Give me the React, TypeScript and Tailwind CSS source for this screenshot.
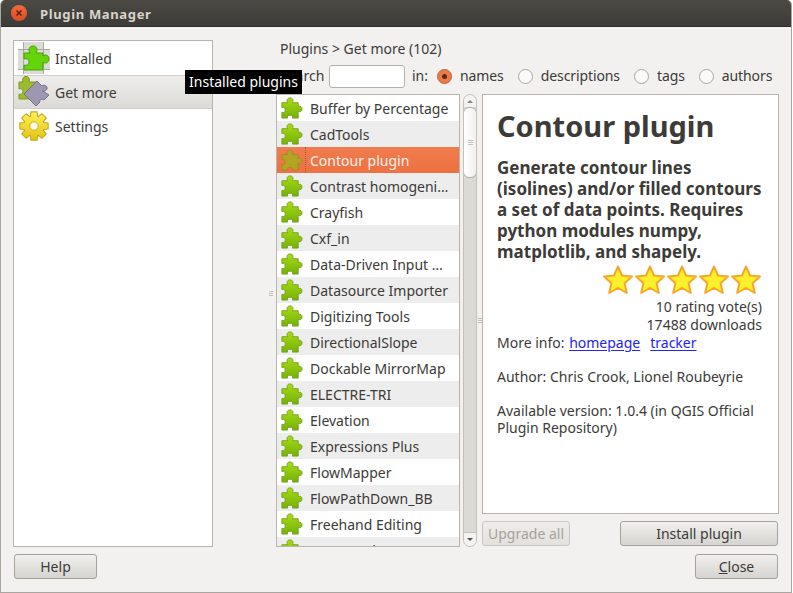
const plugins = [
  "Buffer by Percentage",
  "CadTools",
  "Contour plugin",
  "Contrast homogeni…",
  "Crayfish",
  "Cxf_in",
  "Data-Driven Input …",
  "Datasource Importer",
  "Digitizing Tools",
  "DirectionalSlope",
  "Dockable MirrorMap",
  "ELECTRE-TRI",
  "Elevation",
  "Expressions Plus",
  "FlowMapper",
  "FlowPathDown_BB",
  "Freehand Editing",
  "GeoSearch",
];

const puzzle =
  "M3 6H9C8 4 8 1 11.5 1C15 1 15 4 14 6H20V10C22 9 24 10 24 12.5C24 15 22 16 20 15V22H14C15 20 13.5 19 11.5 19C9.5 19 8 20 9 22H3V16C5 17 6.5 15.5 6.5 13.5C6.5 11.5 5 10 3 11Z";

function gearPath() {
  let d = "";
  const teeth = 8;
  for (let i = 0; i < teeth; i++) {
    const a = (i / teeth) * Math.PI * 2;
    const step = Math.PI / teeth;
    const pts = [
      [a - step * 0.9, 11],
      [a - step * 0.55, 15.5],
      [a + step * 0.55, 15.5],
      [a + step * 0.9, 11],
    ];
    for (const [t, r] of pts) {
      const x = 16 + r * Math.cos(t);
      const y = 16 + r * Math.sin(t);
      d += (d ? "L" : "M") + x.toFixed(1) + " " + y.toFixed(1);
    }
  }
  return d + "Z";
}

function Defs() {
  return (
    <svg className="absolute w-0 h-0">
      <defs>
        <linearGradient id="greenFill" x1="0" y1="0" x2="0" y2="1">
          <stop offset="0" stopColor="#a8dc10" />
          <stop offset="1" stopColor="#74b00c" />
        </linearGradient>
        <linearGradient id="gearFill" x1="0" y1="0" x2="0" y2="1">
          <stop offset="0" stopColor="#fff25a" />
          <stop offset="1" stopColor="#e2c214" />
        </linearGradient>
      </defs>
    </svg>
  );
}

function PuzzleIcon({ selected }: { selected?: boolean }) {
  return (
    <svg width="24" height="24" viewBox="0 0 25 23">
      <path
        d={puzzle}
        fill={selected ? "#b5a322" : "url(#greenFill)"}
        stroke={selected ? "#a08a2c" : "#76a31f"}
        strokeWidth="1"
      />
    </svg>
  );
}

function InstalledIcon() {
  return (
    <svg width="34" height="34" viewBox="0 0 34 34">
      <rect x="1" y="8" width="32" height="21" fill="#dcdcd6" />
      <rect x="6" y="1" width="20" height="32" fill="#dcdcd6" />
      <path d="M1 8.5H33M1 28.5H33M6.5 1V33M26.5 1V33" stroke="#a9a9a2" strokeWidth="1" fill="none" />
      <path
        d="M7 12H13C11 9 12 5 16 5C20 5 21 9 19 12H26V15C28 13 32 14 32 18C32 22 28 23 26 21V29H7V24C10 25 12 23.5 12 21C12 18.5 10 17 7 18Z"
        fill="#66d40a"
        stroke="#4c9e0c"
        strokeWidth="1"
      />
    </svg>
  );
}

function GetMoreIcon() {
  return (
    <svg width="34" height="34" viewBox="0 0 34 34">
      <path
        d="M2 7H6C5 4 6 1.5 9 1.5C12 1.5 13 4 12 7H20V24H2V19C4 20 6 19 6 16.5C6 14 4 13 2 14Z"
        fill="#9dbb2c"
        stroke="#7d9a22"
        strokeWidth="1"
      />
      <path
        d="M20 6L25 11C27 9 31 11 30 14C29 16 27 17 25.5 16L32 20L27 25C25 23 22 25 23 27L19 31L7 19Z"
        fill="#9d97b2"
        stroke="#77728c"
        strokeWidth="1"
      />
    </svg>
  );
}

function GearIcon() {
  return (
    <svg width="30" height="30" viewBox="0 0 32 32">
      <path d={gearPath()} fill="url(#gearFill)" stroke="#c9a91a" strokeWidth="1.2" />
      <circle cx="16" cy="16" r="4.5" fill="#fffde8" stroke="#c9a91a" strokeWidth="1" />
    </svg>
  );
}

function Star() {
  return (
    <svg width="32" height="32" viewBox="0 0 32 32" className="shrink-0">
      <path
        d="M16 2.5L20 11.5L30 12.5L22.6 19.2L24.8 29L16 24L7.2 29L9.4 19.2L2 12.5L12 11.5Z"
        fill="#fff02a"
        stroke="#f5a72c"
        strokeWidth="2"
        strokeLinejoin="round"
      />
    </svg>
  );
}

function Radio({ label, checked }: { label: string; checked?: boolean }) {
  return (
    <div className="flex items-center gap-[8px]">
      {checked ? (
        <span className="w-[15px] h-[15px] rounded-full bg-[#ee7a4a] border border-[#b5643f] flex items-center justify-center">
          <span className="w-[5px] h-[5px] rounded-full bg-[#5a2c1c]" />
        </span>
      ) : (
        <span className="w-[15px] h-[15px] rounded-full bg-[#fbfafa] border border-[#a9a59f]" />
      )}
      <span className="tracking-[-0.1px] -mt-px">{label}</span>
    </div>
  );
}

function Button({ children, className }: { children: React.ReactNode; className: string }) {
  return (
    <div
      className={
        "h-[25px] rounded-[3px] border border-[#a5a19b] bg-gradient-to-b from-[#f1f0ee] to-[#d6d4d0] flex items-center justify-center " +
        className
      }
    >
      {children}
    </div>
  );
}

function SideRow({ icon, label, active }: { icon: React.ReactNode; label: string; active?: boolean }) {
  return (
    <div
      className={
        "h-[34px] flex items-center " +
        (active ? "bg-gradient-to-b from-[#efeeec] to-[#dcdad6] border-y border-[#d2d0cc]" : "")
      }
    >
      <div className="w-[41px] flex justify-center pr-px">{icon}</div>
      <span className="pt-[2px]">{label}</span>
    </div>
  );
}

function Grip({ vertical }: { vertical?: boolean }) {
  return (
    <div className="flex flex-col gap-[1px]">
      {[0, 1, 2].map((i) => (
        <div key={i} className={vertical ? "w-[5px] h-[1px] bg-[#c4c1bb]" : "w-[4px] h-[1px] bg-[#c4c1bb]"} />
      ))}
    </div>
  );
}

export default function App() {
  return (
    <div className="relative w-[792px] h-[593px] flex flex-col bg-[#f2f1ef] border-x border-b border-[#a9a59f] rounded-t-[5px] overflow-hidden text-[14px] leading-[18px] text-[#3c3b37] font-['Noto_Sans',sans-serif]">
      <Defs />
      {/* title bar */}
      <div className="h-[27px] shrink-0 -mx-px flex items-center bg-gradient-to-b from-[#4b4a45] to-[#3c3b37] border-b border-[#2f2e2b]">
        <div className="ml-[11px] w-4 h-4 rounded-full bg-gradient-to-b from-[#ef6a3c] to-[#db4d24] flex items-center justify-center">
          <svg width="8" height="8" viewBox="0 0 8 8">
            <path d="M1.5 1.5L6.5 6.5M6.5 1.5L1.5 6.5" stroke="#5a2010" strokeWidth="1.5" />
          </svg>
        </div>
        <span className="ml-[13px] pt-px font-bold text-[13px] text-[#d8d3ca] tracking-[0.65px]">Plugin Manager</span>
      </div>

      {/* body */}
      <div className="flex flex-1 pt-[13px] pl-[12px] pr-[12px]">
        <div className="w-[200px] h-[507px] shrink-0 bg-white border border-[#b9b5ae]">
          <SideRow icon={<InstalledIcon />} label="Installed" />
          <SideRow icon={<GetMoreIcon />} label="Get more" active />
          <SideRow icon={<GearIcon />} label="Settings" />
        </div>
        <div className="w-[63px] h-[507px] shrink-0 flex items-center justify-end pr-[3px]">
          <Grip />
        </div>
        <div className="flex-1 min-w-0">
          <div className="pl-[4px] h-[18px]">Plugins &gt; Get more (102)</div>
          <div className="h-[36px] flex items-center">
            <span className="pl-[4px] w-[53px]">Search</span>
            <div className="w-[76px] h-[23px] bg-white border border-[#b5b1aa] rounded-[3px]" />
            <span className="ml-[7px] mr-[9px]">in:</span>
            <div className="flex gap-[14px]">
              <Radio label="names" checked />
              <Radio label="descriptions" />
              <Radio label="tags" />
              <Radio label="authors" />
            </div>
          </div>
          <div className="flex h-[453px]">
            <div className="w-[184px] shrink-0 bg-white border border-[#b9b5ae] overflow-hidden">
              {plugins.map((name, i) => {
                const selected = i === 2;
                return (
                  <div
                    key={name}
                    className={
                      "h-[26px] flex items-center " +
                      (selected
                        ? "bg-gradient-to-b from-[#ef7c4e] to-[#ee7141] text-[#fdf3ee]"
                        : i % 2
                          ? "bg-[#eeeded]"
                          : "bg-white")
                    }
                  >
                    <div className="w-[28px] pl-[2px] shrink-0 flex">
                      <PuzzleIcon selected={selected} />
                    </div>
                    <span
                      className={
                        "pl-[4px] pt-[2px] h-full flex items-center flex-1 whitespace-nowrap border-l border-dotted " +
                        (selected ? "border-[#b05a35]" : "border-transparent")
                      }
                    >
                      {name}
                    </span>
                  </div>
                );
              })}
            </div>
            {/* scrollbar */}
            <div className="w-[14px] ml-[3px] shrink-0 flex flex-col rounded-[7px] border border-[#c4c1bb] bg-[#dcdad5] overflow-hidden">
              <div className="h-[12px] shrink-0 bg-[#f4f3f1] flex items-center justify-center">
                <div className="w-0 h-0 border-x-[3px] border-x-transparent border-b-[3px] border-b-[#8a8781]" />
              </div>
              <div className="h-[71px] shrink-0 bg-gradient-to-r from-[#ffffff] to-[#f1f0ee] border border-[#aeaaa4] rounded-[6px] flex items-center justify-center -mx-px">
                <Grip vertical />
              </div>
              <div className="flex-1" />
              <div className="h-[14px] shrink-0 bg-[#f4f3f1] border-t border-[#c4c1bb] flex items-center justify-center">
                <div className="w-0 h-0 border-x-[3px] border-x-transparent border-t-[3px] border-t-[#55534e]" />
              </div>
            </div>
            <div className="w-[5px] shrink-0 flex items-center justify-center">
              <Grip />
            </div>
            <div className="flex-1 min-w-0 flex flex-col">
              <div className="h-[420px] bg-white border border-[#b9b5ae] pl-[14px] pr-[16px] pt-[11px]">
                <h1 className="font-bold text-[29px] leading-[40px]">Contour plugin</h1>
                <p className="mt-[11px] font-bold text-[17px] leading-[21px] whitespace-nowrap">
                  Generate contour lines
                  <br />
                  (isolines) and/or filled contours
                  <br />
                  a set of data points. Requires
                  <br />
                  python modules numpy,
                  <br />
                  matplotlib, and shapely.
                </p>
                <div className="mt-[2px] flex justify-end">
                  <Star />
                  <Star />
                  <Star />
                  <Star />
                  <Star />
                </div>
                <div className="mt-[2px] text-right">10 rating vote(s)</div>
                <div className="text-right">17488 downloads</div>
                <div>
                  More info: <span className="ml-px text-[#2222ff] underline underline-offset-2">homepage</span>
                  <span className="ml-[10px] text-[#2222ff] underline underline-offset-2">tracker</span>
                </div>
                <div className="mt-[16px]">Author: Chris Crook, Lionel Roubeyrie</div>
                <div className="mt-[16px] leading-[17px]">
                  Available version: 1.0.4 (in QGIS Official
                  <br />
                  Plugin Repository)
                </div>
              </div>
              <div className="mt-[7px] flex justify-between pr-px">
                <Button className="w-[88px] !border-[#c9c6c0] !from-[#eeedeb] !to-[#e3e1dd] text-[#a5a29c]">Upgrade all</Button>
                <Button className="w-[158px]">Install plugin</Button>
              </div>
            </div>
          </div>
        </div>
      </div>

      {/* bottom buttons */}
      <div className="flex justify-between pl-[13px] pr-[13px] pb-[13px]">
        <Button className="w-[83px]">Help</Button>
        <Button className="w-[83px]">
          <span>
            <span className="underline">C</span>lose
          </span>
        </Button>
      </div>

      {/* tooltip */}
      <div className="absolute left-[184px] top-[70px] w-[117px] h-[24px] bg-black text-white flex items-center justify-center whitespace-nowrap">
        Installed plugins
      </div>
    </div>
  );
}
